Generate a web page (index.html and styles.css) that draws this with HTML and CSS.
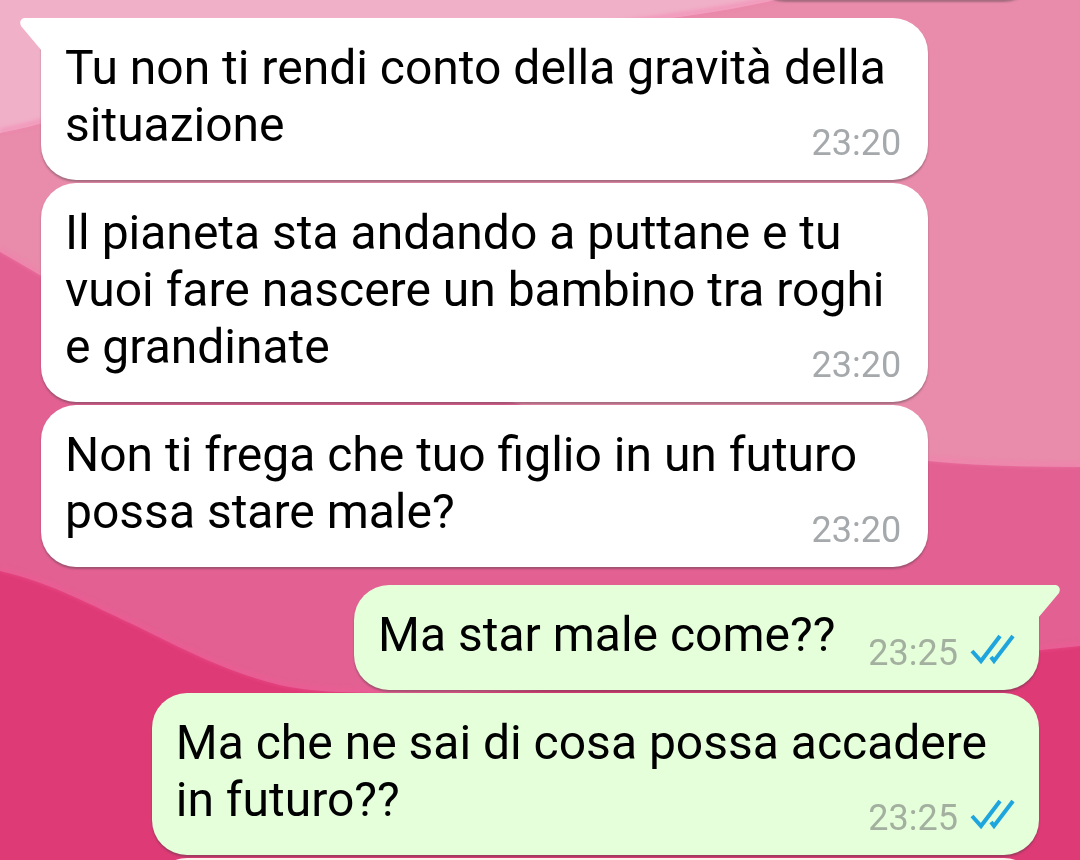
FILE: index.html
```html
<!DOCTYPE html>
<html lang="it">
<head>
    <meta charset="utf-8">
    <meta name="viewport" content="width=device-width, initial-scale=1">
    <title>Chat</title>
    <link rel="stylesheet" href="styles.css">
</head>
<body>
  <!-- wallpaper -->
  <svg class="wallpaper" viewBox="0 0 1080 860" preserveAspectRatio="none" aria-hidden="true">
    <defs>
      <filter id="soft" x="-5%" y="-5%" width="110%" height="110%"><feGaussianBlur stdDeviation="2"/></filter>
    </defs>
    <rect width="1080" height="860" fill="#f0b0c8"/>
    <path fill="#e98bab" d="M0 133 C60 122 90 105 200 75 C400 40 650 30 775 0 H1080 V860 H0 Z"/>
    <path class="edge" d="M0 131 C60 120 90 103 200 73 C400 38 650 28 775 -2"/>
    <path fill="#e26092" d="M0 252 C60 285 120 330 240 355 C340 375 440 385 515 403 C640 440 800 459 928 461 C980 466 1030 467 1080 467 V860 H0 Z"/>
    <path class="edge" d="M0 250 C60 283 120 328 240 353 C340 373 440 383 515 401 C640 438 800 457 928 459 C980 464 1030 465 1080 465"/>
    <path fill="#de3a76" d="M0 571 C50 582 95 607 130 623 C180 647 220 670 280 685 C310 692 350 693 400 693 C650 692 850 670 1080 646 V860 H0 Z"/>
    <path class="edge deep" d="M0 569 C50 580 95 605 130 621 C180 645 220 668 280 683 C310 690 350 691 400 691 C650 690 850 668 1080 644"/>
  </svg>

  <main class="chat">
    <div class="bubble out previous"></div>

    <div class="bubble in first">
      <svg class="tail" viewBox="0 0 22 36" aria-hidden="true"><path d="M22 0 H5 C1 0 -1 4 1 8 L22 33 Z"/></svg>
      <p>Tu non ti rendi conto della gravità della situazione<span class="meta"><time>23:20</time></span></p>
    </div>

    <div class="bubble in">
      <p>Il pianeta sta andando a puttane e tu vuoi fare nascere un bambino tra roghi e grandinate<span class="meta"><time>23:20</time></span></p>
    </div>

    <div class="bubble in">
      <p>Non ti frega che tuo figlio in un futuro possa stare male?<span class="meta"><time>23:20</time></span></p>
    </div>

    <div class="bubble out first short">
      <svg class="tail" viewBox="0 0 22 36" aria-hidden="true"><path d="M0 0 H17 C21 0 23 4 21 8 L0 33 Z"/></svg>
      <p>Ma star male come??<span class="meta"><time>23:25</time><svg class="ticks" viewBox="0 0 46 38" role="img" aria-label="Letto"><path d="M2 17 L11 27 L30 2 M21 23 L24 27 L43 2"/></svg></span></p>
    </div>

    <div class="bubble out">
      <p>Ma che ne sai di cosa possa accadere in futuro??<span class="meta"><time>23:25</time><svg class="ticks" viewBox="0 0 46 38" role="img" aria-label="Letto"><path d="M2 17 L11 27 L30 2 M21 23 L24 27 L43 2"/></svg></span></p>
    </div>

    <div class="bubble out next"></div>
  </main>
</body>
</html>
```
FILE: styles.css
```css
body{
    margin: 0;
    background: #e26092;
    font-family: Roboto, "Liberation Sans", sans-serif;
}

.wallpaper{
    position: fixed;
    top: 0;
    left: 0;
    width: 100%;
    height: 100%;
}

.edge{
    fill: none;
    stroke: #f47fab;
    stroke-width: 4px;
    opacity: 0.6;
    filter: url(#soft);
}

.deep{
    stroke: #f25c97;
}

.chat{
    position: relative;
    display: flex;
    flex-direction: column;
    gap: 3px;
    box-sizing: border-box;
    height: 100vh;
    padding: 0 41px;
    overflow: hidden;
}

.bubble{
    position: relative;
    display: flow-root;
    box-sizing: border-box;
    width: 88.9%;
    flex-shrink: 0;
    padding: 21px 27px 16px 24px;
    border-radius: 35px;
    box-shadow: 0 2px 2px rgba(60, 60, 60, 0.4);
}

.in{
    align-self: flex-start;
    background: #fff;
}

.out{
    align-self: flex-end;
    padding-right: 23px;
    background: #e5ffdb;
}

.first{
    margin-top: 15px;
}

.in.first{
    border-top-left-radius: 0;
}

.out.first{
    border-top-right-radius: 0;
}

.short{
    width: auto;
}

.bubble p{
    margin: 0;
    font-size: 48px;
    line-height: 57px;
    color: #000;
}

/* the time floats to the right of the last line, a bit lower */
.meta{
    float: right;
    display: flex;
    align-items: center;
    gap: 12px;
    margin: 26px 0 0 33px;
    font-size: 36px;
    line-height: 42px;
    color: #a5a9ab;
}

.out .meta{
    color: #a3b09f;
}

.ticks{
    width: 46px;
    height: 38px;
    fill: none;
    stroke: #1fa5dd;
    stroke-width: 4px;
}

.tail{
    position: absolute;
    top: 0;
    width: 22px;
    height: 36px;
}

.in .tail{
    left: -21px;
    fill: #fff;
}

.out .tail{
    right: -21px;
    fill: #e5ffdb;
}

/* neighbours cut by the top and bottom of the screen */
.previous{
    width: 29%;
    height: 80px;
    margin-top: -80px;
}

.next{
    height: 105px;
    background: #fdf0ea;
}
```
